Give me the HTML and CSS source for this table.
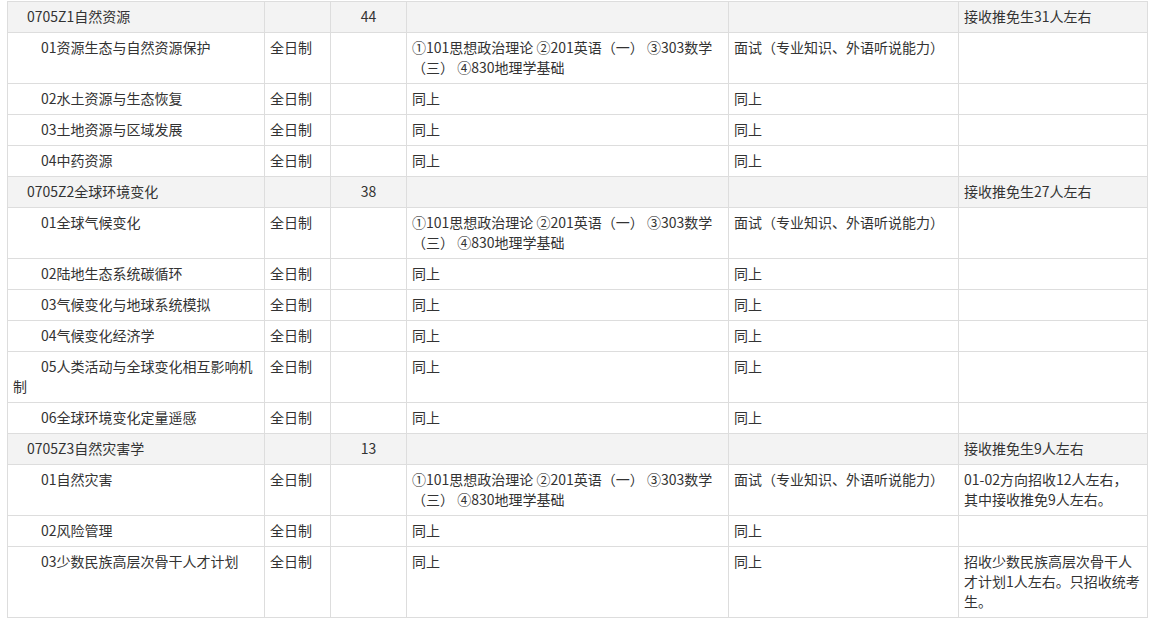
FILE: index.html
```html
<!DOCTYPE html>
<html lang="zh-CN">
<head>
<meta charset="utf-8">
<title>招生目录</title>
<link rel="stylesheet" href="styles.css">
</head>
<body>
<div class="wrap">
<table class="plan">
<colgroup>
<col class="c1"><col class="c2"><col class="c3"><col class="c4"><col class="c5"><col class="c6">
</colgroup>
<tbody>
<tr class="major"><td class="name">0705Z1自然资源</td><td></td><td class="num">44</td><td></td><td></td><td>接收推免生31人左右</td></tr>
<tr><td class="dir">01资源生态与自然资源保护</td><td>全日制</td><td></td><td>①101思想政治理论 ②201英语（一） ③303数学（三） ④830地理学基础</td><td>面试（专业知识、外语听说能力）</td><td></td></tr>
<tr><td class="dir">02水土资源与生态恢复</td><td>全日制</td><td></td><td>同上</td><td>同上</td><td></td></tr>
<tr><td class="dir">03土地资源与区域发展</td><td>全日制</td><td></td><td>同上</td><td>同上</td><td></td></tr>
<tr><td class="dir">04中药资源</td><td>全日制</td><td></td><td>同上</td><td>同上</td><td></td></tr>
<tr class="major"><td class="name">0705Z2全球环境变化</td><td></td><td class="num">38</td><td></td><td></td><td>接收推免生27人左右</td></tr>
<tr><td class="dir">01全球气候变化</td><td>全日制</td><td></td><td>①101思想政治理论 ②201英语（一） ③303数学（三） ④830地理学基础</td><td>面试（专业知识、外语听说能力）</td><td></td></tr>
<tr><td class="dir">02陆地生态系统碳循环</td><td>全日制</td><td></td><td>同上</td><td>同上</td><td></td></tr>
<tr><td class="dir">03气候变化与地球系统模拟</td><td>全日制</td><td></td><td>同上</td><td>同上</td><td></td></tr>
<tr><td class="dir">04气候变化经济学</td><td>全日制</td><td></td><td>同上</td><td>同上</td><td></td></tr>
<tr><td class="dir">05人类活动与全球变化相互影响机制</td><td>全日制</td><td></td><td>同上</td><td>同上</td><td></td></tr>
<tr><td class="dir">06全球环境变化定量遥感</td><td>全日制</td><td></td><td>同上</td><td>同上</td><td></td></tr>
<tr class="major"><td class="name">0705Z3自然灾害学</td><td></td><td class="num">13</td><td></td><td></td><td>接收推免生9人左右</td></tr>
<tr><td class="dir">01自然灾害</td><td>全日制</td><td></td><td>①101思想政治理论 ②201英语（一） ③303数学（三） ④830地理学基础</td><td>面试（专业知识、外语听说能力）</td><td>01-02方向招收12人左右，<br>其中接收推免9人左右。</td></tr>
<tr><td class="dir">02风险管理</td><td>全日制</td><td></td><td>同上</td><td>同上</td><td></td></tr>
<tr><td class="dir">03少数民族高层次骨干人才计划</td><td>全日制</td><td></td><td>同上</td><td>同上</td><td>招收少数民族高层次骨干人才计划1人左右。只招收统考生。</td></tr>
</tbody>
</table>
</div>
</body>
</html>
```

FILE: styles.css
```css
html, body {
  margin: 0;
  padding: 0;
  background: #ffffff;
}

.wrap {
  padding: 1px 0 0 7px;
}

.plan {
  border-collapse: collapse;
  table-layout: fixed;
  width: 1140px;
  font-family: "Microsoft YaHei", "Noto Sans CJK SC", "Noto Sans", sans-serif;
  font-size: 14px;
  line-height: 20px;
  color: #333333;
}

.c1 { width: 257px; }
.c2 { width: 66px; }
.c3 { width: 76px; }
.c4 { width: 322px; }
.c5 { width: 230px; }
.c6 { width: 189px; }

.plan td {
  border: 1px solid #dddddd;
  padding: 4px 5px 6px 5px;
  vertical-align: top;
  text-align: left;
  word-break: break-all;
}

.plan tr.major td {
  background: #f3f3f3;
}

.plan td.name {
  text-indent: 14px;
}

.plan td.dir {
  text-indent: 28px;
}

.plan td.num {
  text-align: center;
}
```
